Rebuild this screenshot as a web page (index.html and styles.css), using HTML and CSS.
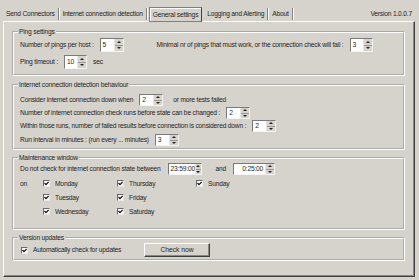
FILE: index.html
```html
<!DOCTYPE html>
<html lang="en">
<head>
  <meta charset="UTF-8">
  <title>General settings</title>
  <link rel="stylesheet" href="styles.css">
</head>
<body>
  <div class="window">
    <div class="topbar">
      <div class="tabs">
        <span class="tab">Send Connectors</span>
        <span class="tab">Internet connection detection</span>
        <span class="tab active">General settings</span>
        <span class="tab">Logging and Alerting</span>
        <span class="tab">About</span>
      </div>
      <span class="version">Version 1.0.0.7</span>
    </div>

    <div class="panel">
      <fieldset class="group ping">
        <legend>Ping settings</legend>
        <div class="row tall">
          <span>Number of pings per host :</span>
          <span class="spin"><span class="val">5</span><span class="arrows"><i></i><i></i></span></span>
          <span class="minimal">Minimal nr of pings that must work, or the connection check will fail :</span>
          <span class="spin small"><span class="val">3</span><span class="arrows"><i></i><i></i></span></span>
        </div>
        <div class="row tall">
          <span>Ping timeout :</span>
          <span class="spin small"><span class="val">10</span><span class="arrows"><i></i><i></i></span></span>
          <span class="after">sec</span>
        </div>
      </fieldset>

      <fieldset class="group detect">
        <legend>Internet connection detection behaviour</legend>
        <div class="row">
          <span>Consider internet connection down when</span>
          <span class="spin"><span class="val">2</span><span class="arrows"><i></i><i></i></span></span>
          <span class="after wide">or more tests failed</span>
        </div>
        <div class="row">
          <span>Number of internet connection check runs before state can be changed :</span>
          <span class="spin"><span class="val">2</span><span class="arrows"><i></i><i></i></span></span>
        </div>
        <div class="row">
          <span>Within those runs, number of failed results before connection is considered down :</span>
          <span class="spin"><span class="val">2</span><span class="arrows"><i></i><i></i></span></span>
        </div>
        <div class="row spaced">
          <span>Run interval in minutes : (run every ... minutes)</span>
          <span class="spin"><span class="val">3</span><span class="arrows"><i></i><i></i></span></span>
        </div>
      </fieldset>

      <fieldset class="group maint">
        <legend>Maintenance window</legend>
        <div class="row">
          <span>Do not check for internet connection state between</span>
          <span class="spin time"><span class="val">23:59:00</span><span class="arrows"><i></i><i></i></span></span>
          <span class="and">and</span>
          <span class="spin time long"><span class="val right">0:25:00</span><span class="arrows"><i></i><i></i></span></span>
        </div>
        <div class="days">
          <span class="on">on</span>
          <span class="day"><span class="check"><svg viewBox="0 0 5 5"><polyline points="0.5,2 2,3.6 4.6,1"/></svg></span>Monday</span>
          <span class="day"><span class="check"><svg viewBox="0 0 5 5"><polyline points="0.5,2 2,3.6 4.6,1"/></svg></span>Thursday</span>
          <span class="day"><span class="check"><svg viewBox="0 0 5 5"><polyline points="0.5,2 2,3.6 4.6,1"/></svg></span>Sunday</span>
          <span></span>
          <span class="day"><span class="check"><svg viewBox="0 0 5 5"><polyline points="0.5,2 2,3.6 4.6,1"/></svg></span>Tuesday</span>
          <span class="day"><span class="check"><svg viewBox="0 0 5 5"><polyline points="0.5,2 2,3.6 4.6,1"/></svg></span>Friday</span>
          <span></span>
          <span></span>
          <span class="day"><span class="check"><svg viewBox="0 0 5 5"><polyline points="0.5,2 2,3.6 4.6,1"/></svg></span>Wednesday</span>
          <span class="day"><span class="check"><svg viewBox="0 0 5 5"><polyline points="0.5,2 2,3.6 4.6,1"/></svg></span>Saturday</span>
          <span></span>
        </div>
      </fieldset>

      <fieldset class="group updates">
        <legend>Version updates</legend>
        <div class="row tall">
          <span class="auto"><span class="check"><svg viewBox="0 0 5 5"><polyline points="0.5,2 2,3.6 4.6,1"/></svg></span>Automatically check for updates</span>
          <button class="btn">Check now</button>
        </div>
      </fieldset>
    </div>
  </div>
</body>
</html>
```

FILE: styles.css
```css
body {
  margin: 0;
  background: #d6d3cd;
  font-family: "Liberation Sans", Arial, sans-serif;
  font-size: 6.7px;
  letter-spacing: -0.2px;
  line-height: 8px;
  color: #1e1e1e;
}
.window {
  width: 412px;
  padding: 7px 0 0 3px;
}

/* tab strip */
.topbar {
  display: flex;
  justify-content: space-between;
  align-items: center;
  height: 14px;
}
.tabs {
  display: flex;
  align-items: center;
}
.tab {
  height: 12px;
  line-height: 12px;
  padding: 0 3px;
  border-right: 1px solid #808080;
  box-shadow: 1px 0 0 #fff;
  margin-right: 1px;
}
.tab.active {
  height: 13px;
  line-height: 13px;
  border: 1px solid #808080;
  border-right-color: #404040;
  box-shadow: inset 1px 1px 0 #fff;
  margin: 0 2px 0 1px;
}
.version {
  margin-right: 3px;
}

/* page panel */
.panel {
  width: 412px;
  height: 256px;
  box-sizing: border-box;
  border: 1px solid;
  border-color: #fff #404040 #404040 #fff;
  box-shadow: inset -1px -1px 0 #8a8883;
  padding: 6px 9px 0 8px;
}
.group {
  margin: 0;
  min-width: 0;
  border: 2px groove #fff;
  padding: 2px 5px 5px 6px;
}
.group legend {
  margin-left: -2px;
  padding: 0 1px;
  line-height: 8px;
}
.detect {
  margin-top: 5px;
  padding-top: 5px;
  padding-bottom: 2px;
}
.maint {
  margin-top: 4px;
  padding-top: 1px;
  padding-bottom: 10px;
}
.updates {
  margin-top: 4px;
  padding-top: 1px;
  padding-bottom: 2px;
}

.row {
  display: flex;
  align-items: center;
  height: 12px;
  margin-bottom: 1px;
  white-space: nowrap;
}
.row.tall {
  height: 14px;
  margin-bottom: 3px;
}
.row:last-child {
  margin-bottom: 0;
}
.row.spaced {
  margin-top: 2px;
}
.minimal {
  margin-left: 33px;
}
.after {
  margin-left: 6px;
}
.after.wide {
  margin-left: 10px;
}
.and {
  margin-left: 14px;
}

/* spin boxes */
.spin {
  display: inline-flex;
  box-sizing: border-box;
  width: 24px;
  height: 12px;
  margin-left: 6px;
  background: #fff;
  border: 1px solid;
  border-color: #7a7a7a #f4f4f4 #f4f4f4 #7a7a7a;
}
.row.tall .spin {
  height: 14px;
}
.spin.small {
  width: 23px;
}
.spin.time {
  width: 34px;
  margin-left: 7px;
}
.spin.long {
  width: 42px;
}
.spin .val {
  flex: 1;
  padding-left: 2px;
  display: flex;
  align-items: center;
}
.spin .val.right {
  justify-content: flex-end;
  padding-right: 2px;
}
.arrows {
  width: 8px;
  display: flex;
  flex-direction: column;
  background: #d6d3cd;
  border-left: 1px solid #e8e6e2;
}
.arrows i {
  flex: 1;
  display: flex;
  align-items: center;
  justify-content: center;
  border-bottom: 1px solid #9a9892;
}
.arrows i:last-child {
  border-bottom: none;
}
.arrows i::after {
  content: "";
  border-left: 2px solid transparent;
  border-right: 2px solid transparent;
  border-bottom: 2px solid #222;
}
.arrows i:last-child::after {
  border-bottom: none;
  border-top: 2px solid #222;
}

/* check boxes */
.days {
  display: grid;
  grid-template-columns: 23px 74px 79px auto;
  grid-auto-rows: 13px;
  row-gap: 1px;
  margin-top: 2px;
  align-items: center;
}
.day, .auto {
  display: flex;
  align-items: center;
}
.check {
  width: 7px;
  height: 7px;
  box-sizing: border-box;
  background: #fff;
  border: 1px solid;
  border-color: #6a6a6a #e8e8e8 #e8e8e8 #6a6a6a;
  margin-right: 5px;
  display: flex;
}
.check svg {
  width: 5px;
  height: 5px;
  fill: none;
  stroke: #111;
  stroke-width: 1.3;
}
.auto {
  width: 112px;
  margin-left: 1px;
}
.auto .check {
  margin-right: 5px;
}

.btn {
  margin-left: 11px;
  width: 66px;
  height: 14px;
  padding: 0;
  font: inherit;
  color: inherit;
  background: #d6d3cd;
  border: 1px solid;
  border-color: #fff #404040 #404040 #fff;
  box-shadow: inset -1px -1px 0 #8a8883;
}
```
